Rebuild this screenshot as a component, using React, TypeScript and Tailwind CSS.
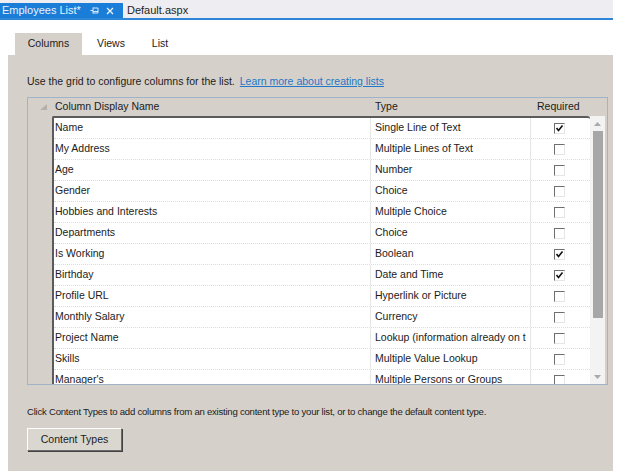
import React from 'react';

type Row = { name: string; type: string; required: boolean };

const rows: Row[] = [
  { name: 'Name', type: 'Single Line of Text', required: true },
  { name: 'My Address', type: 'Multiple Lines of Text', required: false },
  { name: 'Age', type: 'Number', required: false },
  { name: 'Gender', type: 'Choice', required: false },
  { name: 'Hobbies and Interests', type: 'Multiple Choice', required: false },
  { name: 'Departments', type: 'Choice', required: false },
  { name: 'Is Working', type: 'Boolean', required: true },
  { name: 'Birthday', type: 'Date and Time', required: true },
  { name: 'Profile URL', type: 'Hyperlink or Picture', required: false },
  { name: 'Monthly Salary', type: 'Currency', required: false },
  { name: 'Project Name', type: 'Lookup (information already on t', required: false },
  { name: 'Skills', type: 'Multiple Value Lookup', required: false },
  { name: "Manager's", type: 'Multiple Persons or Groups', required: false },
];

const CheckBox = ({ checked }: { checked: boolean }) => (
  <div className="w-[11px] h-[11px] border-t border-l border-t-[#6f6f6f] border-l-[#6f6f6f] border-b border-r border-b-[#e6e6e6] border-r-[#e6e6e6] bg-white flex items-center justify-center">
    {checked && (
      <svg width="9" height="9" viewBox="0 0 9 9">
        <path d="M1.5 4 L3.5 6.5 L7.5 1.5" fill="none" stroke="#111" strokeWidth="1.6" />
      </svg>
    )}
  </div>
);

export default function App() {
  return (
    <div className="w-[620px] h-[471px] bg-white overflow-hidden flex flex-col font-['Liberation_Sans',sans-serif] text-[10.5px] text-[#1b1b1b]">
      {/* document tabs */}
      <div className="w-[613px] h-[18px] bg-[#eeeef2] flex items-end shrink-0">
        <div className="w-[123px] h-[15px] bg-[#1a7dd7] text-white flex items-center pl-[2px] gap-[7px]">
          <span className="text-[#e8f2fc] text-[11px]">Employees List*</span>
          <svg width="9" height="9" viewBox="0 0 9 9" className="ml-[2px]">
            <path d="M0.5 4.5 H3 M3 1.5 V7.5 M3 2 H8 M3 7 H8 M8 2 V7 M3 5.5 H8" fill="none" stroke="#dbe9f7" strokeWidth="1" />
          </svg>
          <svg width="8" height="8" viewBox="0 0 8 8">
            <path d="M1 1 L7 7 M7 1 L1 7" stroke="#eef5fc" strokeWidth="1.3" />
          </svg>
        </div>
        <div className="h-[15px] flex items-center pl-[4px] text-[11px] text-[#1e1e1e]">Default.aspx</div>
      </div>
      <div className="w-[613px] h-[2px] bg-[#2e86d8] shrink-0" />

      {/* property tabs */}
      <div className="h-[35px] flex items-end pl-[15px] shrink-0">
        <div className="w-[67px] h-[22px] bg-[#d5d1ca] flex items-center justify-center">Columns</div>
        <div className="w-[58px] h-[22px] flex items-center justify-center">Views</div>
        <div className="w-[40px] h-[22px] flex items-center justify-center">List</div>
      </div>

      {/* panel */}
      <div className="ml-[8px] w-[605px] flex-1 bg-[#d5d1ca] pl-[19px] pt-[20px] flex flex-col">
        <div className="h-[14px] flex items-center gap-[5px]">
          <span>Use the grid to configure columns for the list.</span>
          <span className="text-[#2377c9] underline">Learn more about creating lists</span>
        </div>

        {/* grid */}
        <div className="mt-[8px] w-[581px] h-[288px] border border-[#9fb4c9] flex flex-col">
          {/* header */}
          <div className="h-[18px] flex shrink-0">
            <div className="w-[24px] flex items-center justify-end pr-[5px]">
              <svg width="7" height="6" viewBox="0 0 7 6">
                <path d="M7 0 L7 6 L0 6 Z" fill="#b4b1ab" />
              </svg>
            </div>
            <div className="w-[318px] flex items-center pl-[3px]">Column Display Name</div>
            <div className="w-[160px] flex items-center pl-[5px]">Type</div>
            <div className="w-[58px] flex items-center pl-[7px]">Required</div>
          </div>

          {/* body */}
          <div className="flex flex-1 min-h-0">
            <div className="w-[24px] shrink-0" />
            <div className="w-[538px] border-t-2 border-l-2 border-[#5b5b5b] rounded-tl-[2px] rounded-tr-[3px] bg-white flex min-h-0">
              <div className="flex-1 overflow-hidden">
                {rows.map((r) => (
                  <div key={r.name} className="h-[21px] flex border-b border-dotted border-[#dcdcdc] shrink-0">
                    <div className="w-[316px] flex items-center pl-[1px] whitespace-nowrap overflow-hidden">{r.name}</div>
                    <div className="w-[160px] flex items-center pl-[4px] border-l border-[#e6e6e6] whitespace-nowrap overflow-hidden">{r.type}</div>
                    <div className="w-[58px] flex items-center justify-center border-l border-[#e6e6e6]">
                      <CheckBox checked={r.required} />
                    </div>
                  </div>
                ))}
              </div>
            </div>
            {/* scrollbar */}
            <div className="w-[15px] bg-[#f3f3f3] flex flex-col items-center shrink-0">
              <div className="h-[15px] flex items-center justify-center">
                <svg width="7" height="4" viewBox="0 0 7 4">
                  <path d="M0 4 L3.5 0 L7 4 Z" fill="#a9a9a9" />
                </svg>
              </div>
              <div className="w-[10px] h-[187px] bg-[#a7a7a7]" />
              <div className="flex-1" />
              <div className="h-[15px] flex items-center justify-center">
                <svg width="7" height="4" viewBox="0 0 7 4">
                  <path d="M0 0 L3.5 4 L7 0 Z" fill="#a9a9a9" />
                </svg>
              </div>
            </div>
          </div>
        </div>

        <div className="mt-[20px] h-[14px] flex items-center whitespace-nowrap text-[9.6px] tracking-[-0.25px]">
          Click Content Types to add columns from an existing content type to your list, or to change the default content type.
        </div>
        <button className="mt-[9px] w-[95px] h-[23px] bg-[#dad7d1] border border-t-white border-l-white border-b-[#6b6b6b] border-r-[#6b6b6b] shadow-[1px_1px_0_#404040] flex items-center justify-center text-[10.5px] text-[#1b1b1b]">
          Content Types
        </button>
      </div>
    </div>
  );
}
